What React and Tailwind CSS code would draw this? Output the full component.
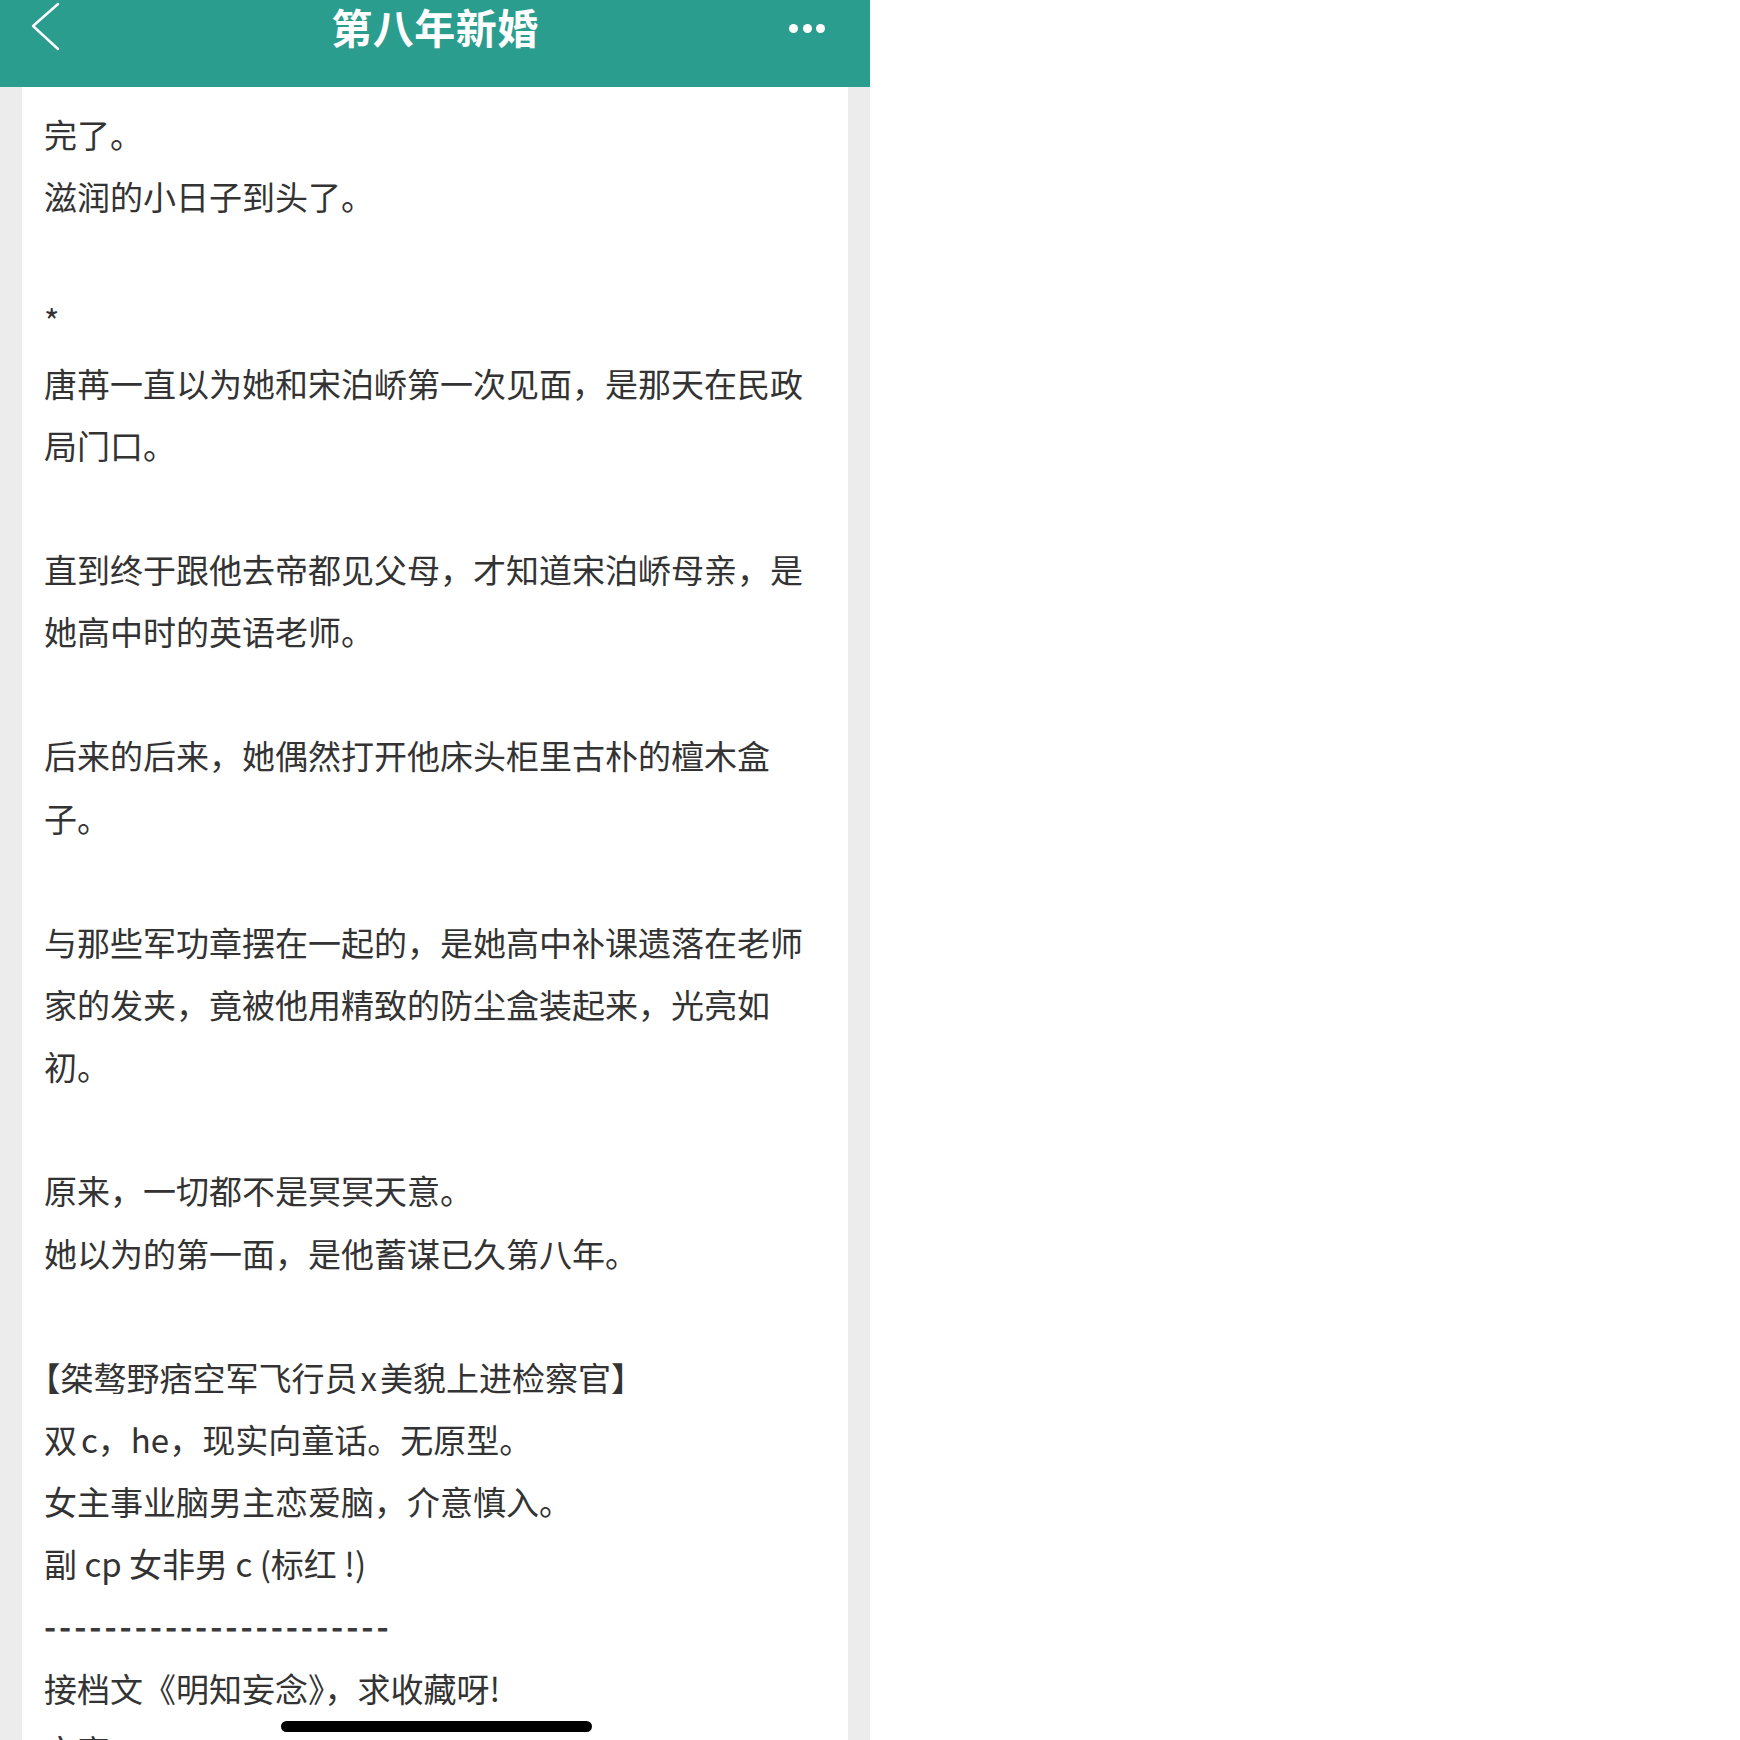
import React from 'react';

const halt = "[font-feature-settings:'halt']";

const lines = [
  '完了。',
  '滋润的小日子到头了。',
  '',
  '*',
  '唐苒一直以为她和宋泊峤第一次见面，是那天在民政',
  '局门口。',
  '',
  '直到终于跟他去帝都见父母，才知道宋泊峤母亲，是',
  '她高中时的英语老师。',
  '',
  '后来的后来，她偶然打开他床头柜里古朴的檀木盒',
  '子。',
  '',
  '与那些军功章摆在一起的，是她高中补课遗落在老师',
  '家的发夹，竟被他用精致的防尘盒装起来，光亮如',
  '初。',
  '',
  '原来，一切都不是冥冥天意。',
  '她以为的第一面，是他蓄谋已久第八年。',
  '',
  <>
    <span className={halt}>【</span>桀骜野痞空军飞行员<span className="mx-[3px]">x</span>美貌上进检察官<span className={halt}>】</span>
  </>,
  <>
    双<span className="ml-[4px]">c</span>，he，现实向童话。无原型。
  </>,
  '女主事业脑男主恋爱脑，介意慎入。',
  '副 cp 女非男 c (标红 !)',
  <span className="tracking-[2.9px] font-semibold text-[#3a3a3a]">-----------------------</span>,
  <>
    接档文《明知妄念<span className={halt}>》</span>，求收藏呀!
  </>,
  '文案：',
];

const Header = () => (
  <div className="h-[87px] bg-[#2a9d8e] shrink-0">
    <div className="grid grid-cols-[1fr_auto_1fr] items-center h-[56px]">
      <div className="flex items-center pl-[30px]">
        <svg width="32" height="56" viewBox="0 0 32 56" fill="none">
          <path d="M28 4 L3 26 L28 49" stroke="white" strokeWidth="2.4" strokeLinecap="round" strokeLinejoin="round" />
        </svg>
      </div>
      <div className="text-white text-[41px] font-bold leading-[48px] tracking-[0.5px] -mt-[4px]">第八年新婚</div>
      <div className="flex justify-end items-center gap-[4.5px] pr-[45px] pt-[1px]">
        <span className="w-[9px] h-[9px] rounded-full bg-white" />
        <span className="w-[9px] h-[9px] rounded-full bg-white" />
        <span className="w-[9px] h-[9px] rounded-full bg-white" />
      </div>
    </div>
  </div>
);

export default function App() {
  return (
    <div className="relative w-[870px] h-[1740px] overflow-hidden flex flex-col bg-[#ececec] font-['Noto_Sans_CJK_SC',sans-serif]">
      <Header />
      <div className="flex-1 mx-[22px] bg-white pl-[22px] pt-[16px] text-[#333] text-[33px]">
        {lines.map((line, i) => (
          <div key={i} className="h-[62.15px] leading-[62.15px] whitespace-nowrap">
            {line}
          </div>
        ))}
      </div>
      <div className="absolute left-[281px] bottom-[8px] w-[311px] h-[11px] rounded-full bg-black" />
    </div>
  );
}
